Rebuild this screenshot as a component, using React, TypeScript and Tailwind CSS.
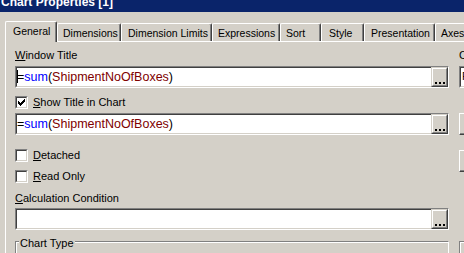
import React from 'react';

const tabs = [
  { label: 'General', cls: 'w-[52px] pl-[7px]', active: true },
  { label: 'Dimensions', cls: 'w-[64px] pl-[5px]' },
  { label: 'Dimension Limits', cls: 'w-[91px] pl-[6px]' },
  { label: 'Expressions', cls: 'w-[68px] pl-[5px]' },
  { label: 'Sort', cls: 'w-[41px] pl-[5px]' },
  { label: 'Style', cls: 'w-[43px] pl-[7px]' },
  { label: 'Presentation', cls: 'w-[71px] pl-[6px]' },
  { label: 'Axes', cls: 'w-[60px] pl-[5px]' },
];

function Dots() {
  return (
    <div className="h-[20px] w-[17px] shrink-0 border border-t-[#d4d0c8] border-l-[#d4d0c8] border-b-[#404040] border-r-[#404040] bg-[#d4d0c8]">
      <div className="flex h-full items-end gap-[2px] border border-t-white border-l-white border-b-[#808080] border-r-[#808080] pb-px pl-[2px]">
        <span className="h-[2px] w-[2px] bg-black" />
        <span className="h-[2px] w-[2px] bg-black" />
        <span className="h-[2px] w-[2px] bg-black" />
      </div>
    </div>
  );
}

function Field({ children, caret }: { children?: React.ReactNode; caret?: boolean }) {
  return (
    <div className="flex h-[22px] border border-t-[#808080] border-l-[#808080] border-b-white border-r-white">
      <div className="relative flex-1 border border-r-0 border-t-[#404040] border-l-[#404040] border-b-[#d4d0c8] bg-white text-[12.5px] leading-[16px] pt-px">
        {caret && <span className="absolute left-0 top-[2px] h-[13px] w-px bg-black" />}
        {children}
      </div>
      <Dots />
    </div>
  );
}

function Formula() {
  return (
    <span className="whitespace-nowrap">
      <span className="text-black">=</span>
      <span className="text-[#0000ff]">sum</span>
      <span className="text-black">(</span>
      <span className="text-[#800000]">ShipmentNoOfBoxes</span>
      <span className="text-black">)</span>
    </span>
  );
}

function CheckBox({ checked }: { checked?: boolean }) {
  return (
    <div className="h-[13px] w-[13px] shrink-0 border border-t-[#808080] border-l-[#808080] border-b-white border-r-white">
      <div className="h-full w-full border border-t-[#404040] border-l-[#404040] border-b-[#d4d0c8] border-r-[#d4d0c8] bg-white p-px">
        {checked && (
          <svg width="7" height="7" viewBox="0 0 7 7" className="block">
            <rect x="0" y="2" width="1" height="3" fill="#000" />
            <rect x="1" y="3" width="1" height="3" fill="#000" />
            <rect x="2" y="4" width="1" height="3" fill="#000" />
            <rect x="3" y="3" width="1" height="3" fill="#000" />
            <rect x="4" y="2" width="1" height="3" fill="#000" />
            <rect x="5" y="1" width="1" height="3" fill="#000" />
            <rect x="6" y="0" width="1" height="3" fill="#000" />
          </svg>
        )}
      </div>
    </div>
  );
}

function Check({ checked, first, rest }: { checked?: boolean; first: string; rest: string }) {
  return (
    <div className="flex h-[13px] items-start gap-[5px] leading-[13px]">
      <CheckBox checked={checked} />
      <span>
        <u>{first}</u>
        {rest}
      </span>
    </div>
  );
}

function RaisedBox({ className }: { className: string }) {
  return (
    <div className={`border border-t-white border-l-white border-b-[#404040] border-r-[#404040] ${className}`}>
      <div className="h-full border-b border-r border-[#808080]" />
    </div>
  );
}

export default function App() {
  return (
    <div className="h-[253px] w-[464px] overflow-hidden bg-[#d4d0c8] font-['Liberation_Sans',Arial,sans-serif] text-[11px] text-black">
      <div className="h-[12px] overflow-hidden bg-[#0a246a]">
        <div className="-mt-[5px] pl-px text-[12px] font-bold leading-[14px] text-white">Chart Properties [1]</div>
      </div>

      <div className="mt-[9px] flex h-[20px] items-end pl-[5px] text-[10.5px]">
        {tabs.map((t) =>
          t.active ? (
            <div
              key={t.label}
              className={`relative z-10 -mb-px h-[21px] shrink-0 rounded-t-[2px] border-l border-t border-r border-l-white border-t-white border-r-[#404040] bg-[#d4d0c8] pt-[3px] leading-[13px] shadow-[inset_-1px_0_0_#808080] ${t.cls}`}
            >
              {t.label}
            </div>
          ) : (
            <div
              key={t.label}
              className={`h-[18px] shrink-0 overflow-hidden rounded-t-[2px] border-l border-t border-r border-l-white border-t-white border-r-[#404040] pt-[3px] leading-[13px] shadow-[inset_-1px_0_0_#808080] whitespace-nowrap ${t.cls}`}
            >
              {t.label}
            </div>
          )
        )}
      </div>

      <div className="ml-[5px] h-[260px] w-[520px] border-l border-t border-white">
        <div className="flex gap-[10px] pl-[9px]">
          <div className="w-[434px] shrink-0">
            <div className="mt-[7px] leading-[13px]">
              <u>W</u>indow Title
            </div>
            <div className="mt-[4px]">
              <Field caret>
                <Formula />
              </Field>
            </div>
            <div className="mt-[8px]">
              <Check checked first="S" rest="how Title in Chart" />
            </div>
            <div className="mt-[4px]">
              <Field>
                <Formula />
              </Field>
            </div>
            <div className="mt-[14px]">
              <Check first="D" rest="etached" />
            </div>
            <div className="mt-[8px]">
              <Check first="R" rest="ead Only" />
            </div>
            <div className="mt-[9px] leading-[13px]">
              <u>C</u>alculation Condition
            </div>
            <div className="mt-[3px]">
              <Field />
            </div>
            <div className="relative mt-[11px] h-[40px] border border-t-[#808080] border-l-[#808080] border-r-white border-b-white shadow-[inset_1px_1px_0_#fff]">
              <span className="absolute -top-[5px] left-[3px] bg-[#d4d0c8] px-px leading-[13px]">Chart Type</span>
            </div>
          </div>

          <div className="w-[80px] shrink-0">
            <div className="mt-[7px] leading-[13px]">Color</div>
            <div className="mt-[4px] h-[22px] border border-t-[#808080] border-l-[#808080] border-b-white border-r-white">
              <div className="h-full border border-t-[#404040] border-l-[#404040] border-b-[#d4d0c8] border-r-[#d4d0c8] bg-white pl-px text-[11px] leading-[16px]">
                Font
              </div>
            </div>
            <RaisedBox className="mt-[25px] h-[22px]" />
            <RaisedBox className="mt-[15px] h-[22px]" />
            <div className="mt-[69px] h-[40px] border border-t-[#808080] border-l-[#808080] border-r-white border-b-white shadow-[inset_1px_1px_0_#fff]" />
          </div>
        </div>
      </div>
    </div>
  );
}
